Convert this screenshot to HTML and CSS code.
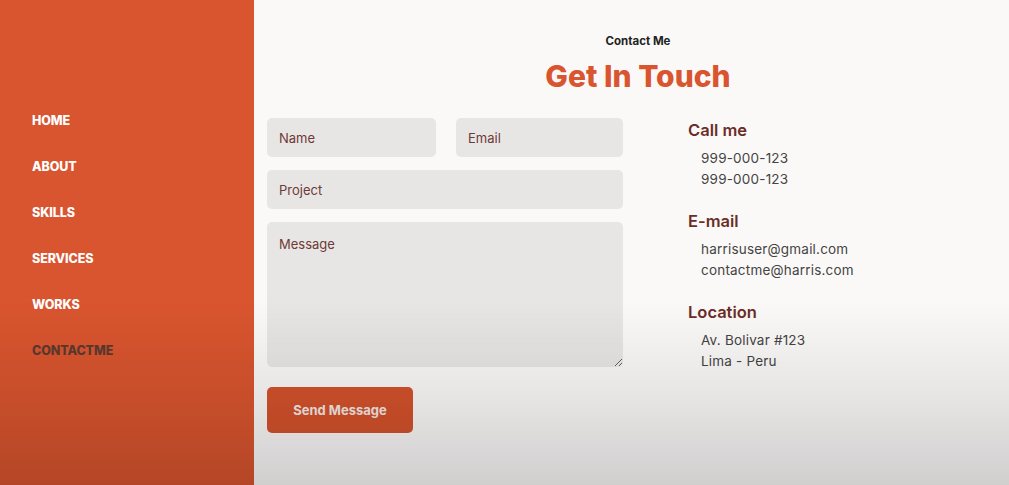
FILE: index.html
```html
<!DOCTYPE html>
<html lang="en">
<head>
<meta charset="utf-8">
<title>Contact</title>
<link rel="stylesheet" href="styles.css">
</head>
<body>
<div class="page">
  <aside class="sidebar">
    <nav class="nav">
      <a class="nav-link" href="#">HOME</a>
      <a class="nav-link" href="#">ABOUT</a>
      <a class="nav-link" href="#">SKILLS</a>
      <a class="nav-link" href="#">SERVICES</a>
      <a class="nav-link" href="#">WORKS</a>
      <a class="nav-link active" href="#">CONTACTME</a>
    </nav>
  </aside>
  <main class="main">
    <header class="head">
      <p class="subtitle">Contact Me</p>
      <h1 class="title">Get In Touch</h1>
    </header>
    <div class="content">
      <form class="form">
        <div class="row">
          <input class="field" type="text" placeholder="Name">
          <input class="field" type="text" placeholder="Email">
        </div>
        <input class="field" type="text" placeholder="Project">
        <textarea class="field area" placeholder="Message"></textarea>
        <button class="btn" type="button">Send Message</button>
      </form>
      <div class="info">
        <section class="info-block">
          <h3 class="info-title">Call me</h3>
          <p class="info-line">999-000-123</p>
          <p class="info-line">999-000-123</p>
        </section>
        <section class="info-block">
          <h3 class="info-title">E-mail</h3>
          <p class="info-line">harrisuser@gmail.com</p>
          <p class="info-line">contactme@harris.com</p>
        </section>
        <section class="info-block">
          <h3 class="info-title">Location</h3>
          <p class="info-line">Av. Bolivar #123</p>
          <p class="info-line">Lima - Peru</p>
        </section>
      </div>
    </div>
  </main>
</div>
</body>
</html>
```
FILE: styles.css
```css
* { box-sizing: border-box; }
html, body { margin: 0; height: 100%; }
body {
  font-family: "Inter", "Open Sans", "DejaVu Sans", sans-serif;
  background: #fbf9f8;
  overflow: hidden;
}
body::after {
  content: "";
  position: fixed;
  inset: 0;
  pointer-events: none;
  background: linear-gradient(to bottom, rgba(0,0,0,0) 0%, rgba(0,0,0,0) 62%, rgba(0,0,0,0.08) 82%, rgba(0,0,0,0.17) 100%);
}
.page {
  display: flex;
  height: 485px;
}
.sidebar {
  width: 254px;
  flex: none;
  background: #d9552f;
  padding: 113px 0 0 32px;
}
.nav {
  display: flex;
  flex-direction: column;
  gap: 30px;
}
.nav-link {
  color: #ffffff;
  text-decoration: none;
  font-size: 12.5px;
  font-weight: 800;
  line-height: 16px;
  letter-spacing: -0.1px;
}
.nav-link.active { color: #5b3a30; }
.main {
  flex: 1;
  padding: 34px 0 0 13px;
}
.head {
  text-align: center;
}
.subtitle {
  margin: 0;
  font-size: 11.5px;
  font-weight: 700;
  color: #222;
  line-height: 14px;
}
.title {
  margin: 10px 0 0;
  font-size: 30px;
  font-weight: 800;
  color: #d9552f;
  line-height: 36px;
  letter-spacing: 0;
}
.content {
  display: flex;
  gap: 65px;
  margin-top: 21px;
}
.form {
  width: 356px;
  margin-top: 3px;
  display: flex;
  flex-direction: column;
  gap: 13px;
}
.row {
  display: flex;
  gap: 20px;
}
.row .field { width: 0; flex: 1; }
.row .field:first-child { flex: 0 0 169px; }
.field {
  border: none;
  outline: none;
  background: #e8e6e5;
  border-radius: 5px;
  height: 39px;
  padding: 0 12px;
  font-family: inherit;
  font-size: 13px;
  color: #6b3535;
}
.field::placeholder { color: #6d3a36; }
.area {
  height: 145px;
  padding-top: 14px;
  resize: vertical;
}
.btn {
  margin-top: 7px;
  width: 146px;
  height: 46px;
  border: none;
  border-radius: 5px;
  background: #d4522c;
  color: #f3e8e4;
  font-family: inherit;
  font-size: 13px;
  font-weight: 700;
}
.info {
  display: flex;
  flex-direction: column;
  gap: 22px;
  padding-top: 5px;
}
.info-title {
  margin: 0 0 8px;
  font-size: 16.5px;
  font-weight: 600;
  color: #6b2d27;
  line-height: 20px;
}
.info-line {
  margin: 0;
  padding-left: 13px;
  font-size: 13.5px;
  line-height: 20.5px;
  color: #444;
  letter-spacing: 0.2px;
}
```
